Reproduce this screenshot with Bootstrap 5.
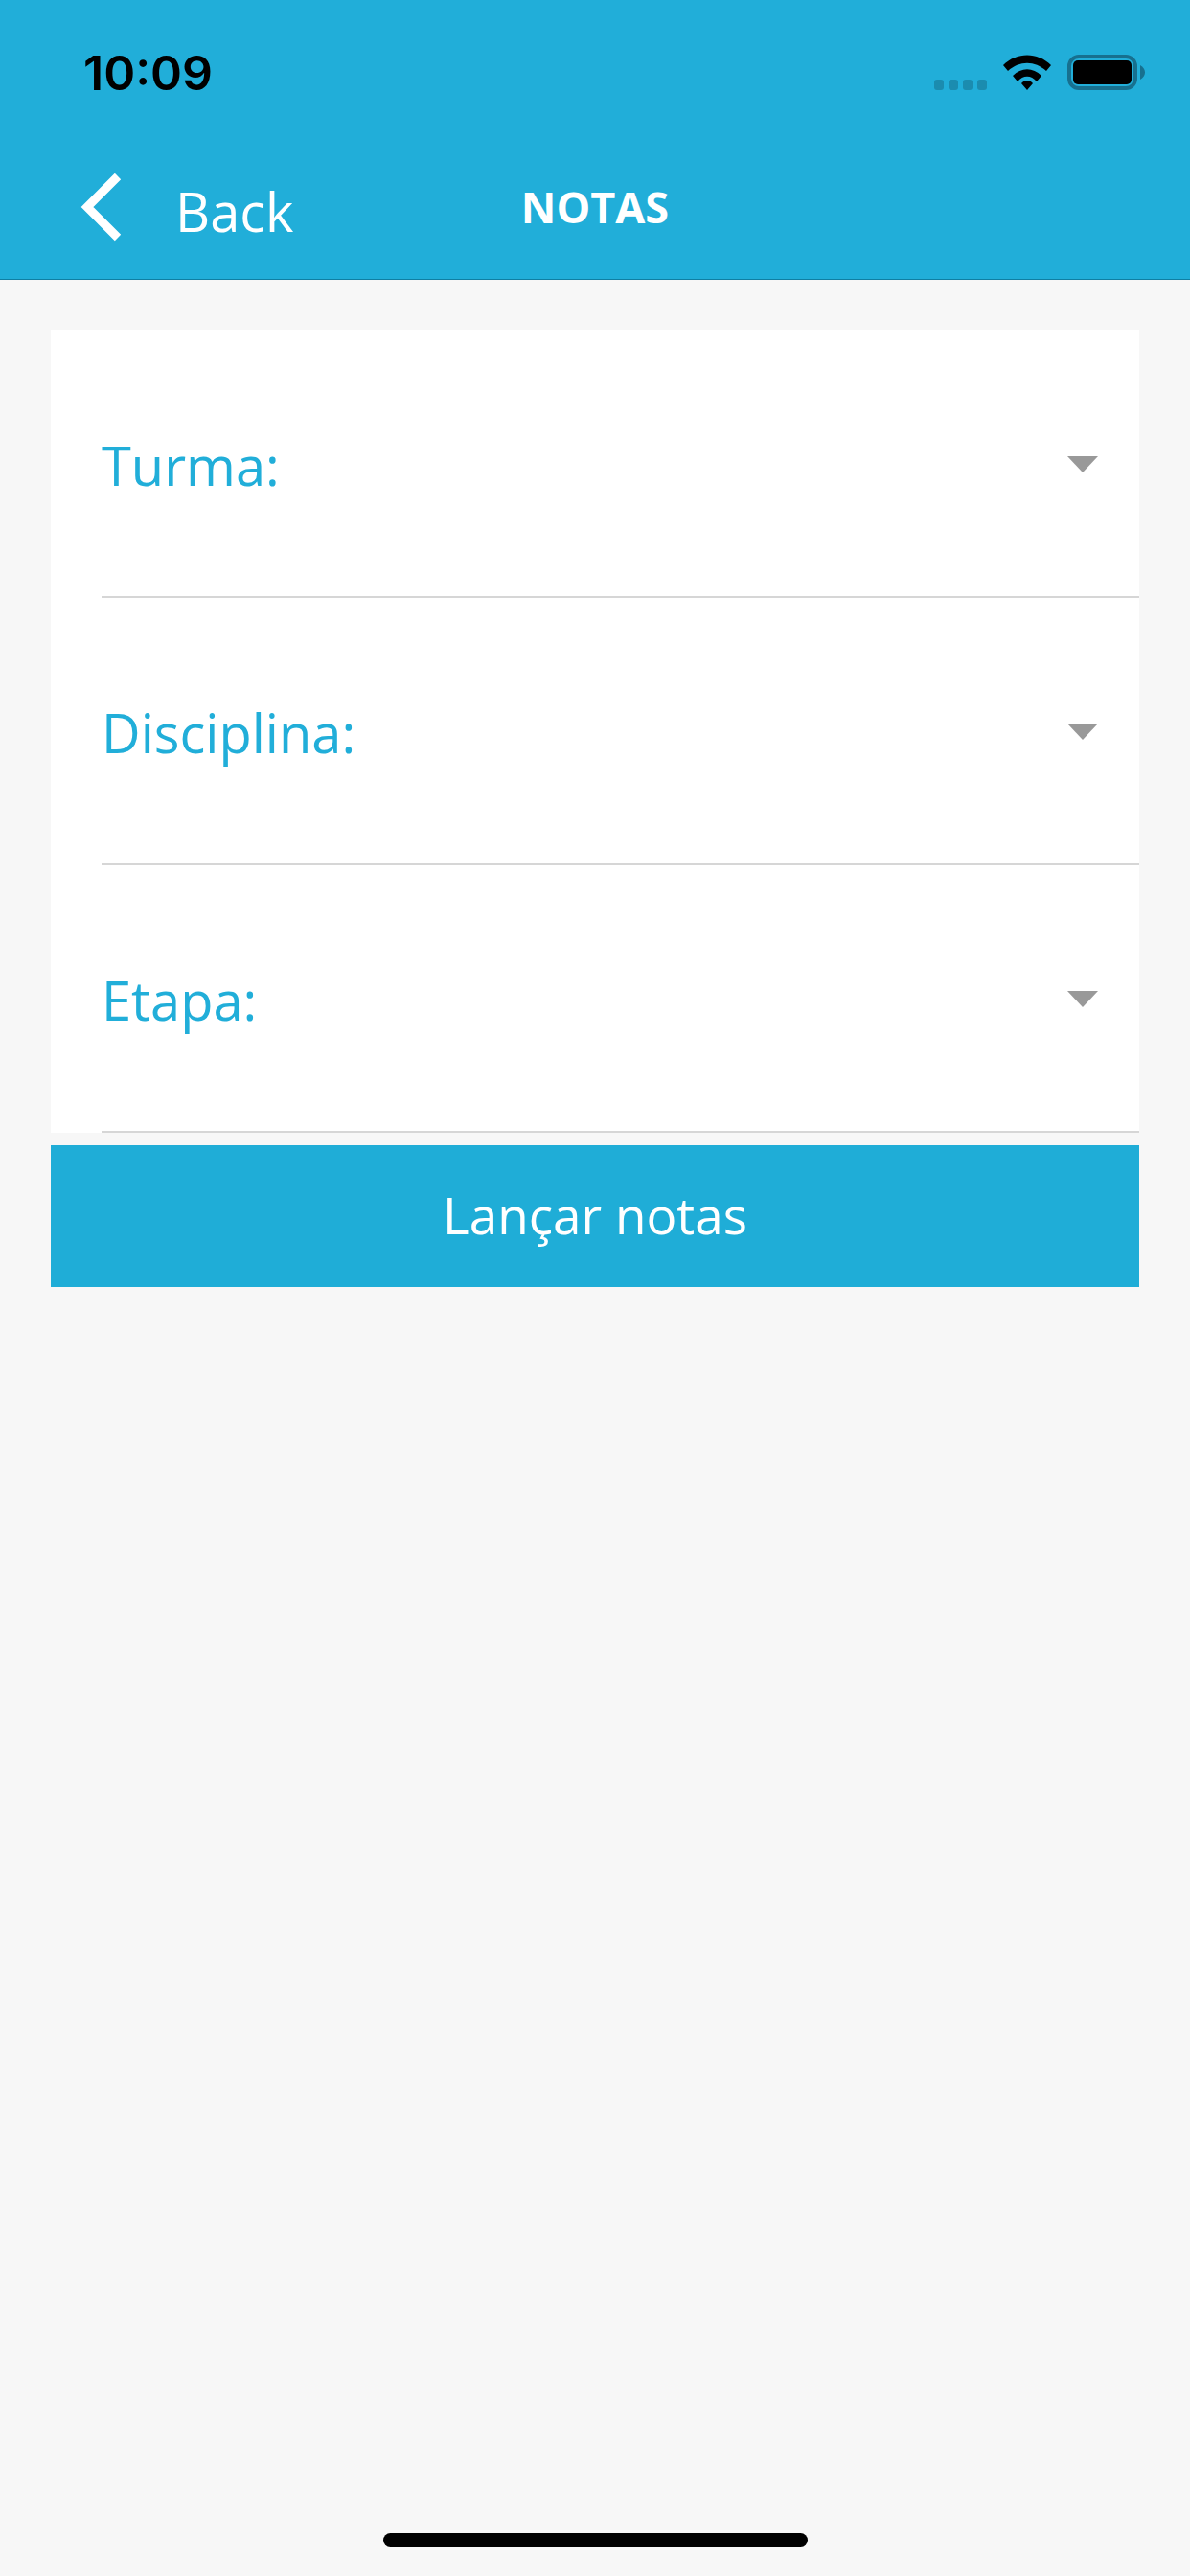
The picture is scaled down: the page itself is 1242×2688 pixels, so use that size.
<!DOCTYPE html>
<html lang="pt">
<head>
  <meta charset="UTF-8">
  <title>Notas</title>
  <link href="https://cdn.jsdelivr.net/npm/bootstrap@5.3.0/dist/css/bootstrap.min.css" rel="stylesheet">
  <style>
    body { background: #f7f7f7; font-family: "Open Sans", sans-serif; width: 1242px; height: 2688px; }
    .app-screen { height: 2688px; }
    .app-header { background: #21aed9; height: 292px; border-bottom: 1px solid #0f7fa3; color: #fff; }
    .status-row { height: 140px; padding: 48px 47px 0 87px; }
    .status-time { font-family: Inter, sans-serif; font-weight: 600; font-size: 50px; line-height: 56px; color: #000; }
    .status-icons { margin-top: 9px; gap: 17px; }
    .signal-dots { gap: 5px; }
    .signal-dots span { width: 10px; height: 11px; border-radius: 3px; background: #1b8caf; }
    .nav-row { height: 151px; padding-left: 82px; }
    .back-text { font-size: 56px; line-height: 70px; margin: 9px 0 0 55px; }
    .page-title { font-size: 45px; line-height: 60px; font-weight: 700; }
    .form-box { margin: 52px 53px 0; padding-top: 1px; background: #fff; }
    .field-row { height: 279px; margin-left: 53px; border-bottom: 2px solid #d6d6d6; padding-right: 43px; }
    .field-label { font-size: 56px; line-height: 70px; color: #21aed9; padding-top: 105px; }
    .field-caret { width: 0; height: 0; border-left: 16.5px solid transparent; border-right: 16.5px solid transparent; border-top: 17px solid #999; margin-top: 131px; }
    .send-btn { margin: 13px 53px 0; width: 1136px; height: 148px; padding-bottom: 8px; background: #1fadd7; color: #fff; font-size: 53px; border: 0; border-radius: 0; }
    .send-btn:hover { background: #1fadd7; color: #fff; }
    .home-bar { left: 400px; bottom: 30px; width: 443px; height: 15px; background: #000; border-radius: 8px; }
  </style>
</head>
<body>
  <div class="app-screen position-relative">
    <header class="app-header">
      <div class="status-row d-flex justify-content-between align-items-start">
        <div class="status-time">10:09</div>
        <div class="status-icons d-flex align-items-end">
          <div class="signal-dots d-flex">
            <span></span><span></span><span></span><span></span>
          </div>
          <svg width="50" height="37" viewBox="0 0 50 37">
            <path d="M0 11 C14 -3 36 -3 50 11 L45 17 C33 6 17 6 5 17 Z" fill="#000"/>
            <path d="M10 22 C19 13 31 13 40 22 L35 28 C29 21 21 21 15 28 Z" fill="#000"/>
            <path d="M19 30 C22 26 28 26 31 30 L25 37 Z" fill="#000"/>
          </svg>
          <svg width="81" height="37" viewBox="0 0 81 37">
            <rect x="2" y="2" width="69" height="33" rx="10" fill="none" stroke="#17708f" stroke-width="4"/>
            <rect x="6" y="6" width="61" height="25" rx="5" fill="#000"/>
            <path d="M76 11 C79 13 81 15 81 18.5 C81 22 79 24 76 26 Z" fill="#17708f"/>
          </svg>
        </div>
      </div>
      <div class="nav-row d-flex align-items-center position-relative">
        <svg width="46" height="72" viewBox="0 0 46 72">
          <path d="M41 4 L9 36 L41 68" fill="none" stroke="#fff" stroke-width="9"/>
        </svg>
        <span class="back-text">Back</span>
        <span class="page-title position-absolute top-50 start-50 translate-middle">NOTAS</span>
      </div>
    </header>

    <form class="m-0">
      <div class="form-box">
        <div class="field-row d-flex justify-content-between align-items-start">
          <div class="field-label">Turma:</div>
          <div class="field-caret"></div>
        </div>
        <div class="field-row d-flex justify-content-between align-items-start">
          <div class="field-label">Disciplina:</div>
          <div class="field-caret"></div>
        </div>
        <div class="field-row d-flex justify-content-between align-items-start">
          <div class="field-label">Etapa:</div>
          <div class="field-caret"></div>
        </div>
      </div>
      <button type="button" class="btn send-btn d-block">Lançar notas</button>
    </form>

    <div class="home-bar position-absolute"></div>
  </div>
  <script src="https://cdn.jsdelivr.net/npm/bootstrap@5.3.0/dist/js/bootstrap.bundle.min.js"></script>
</body>
</html>
